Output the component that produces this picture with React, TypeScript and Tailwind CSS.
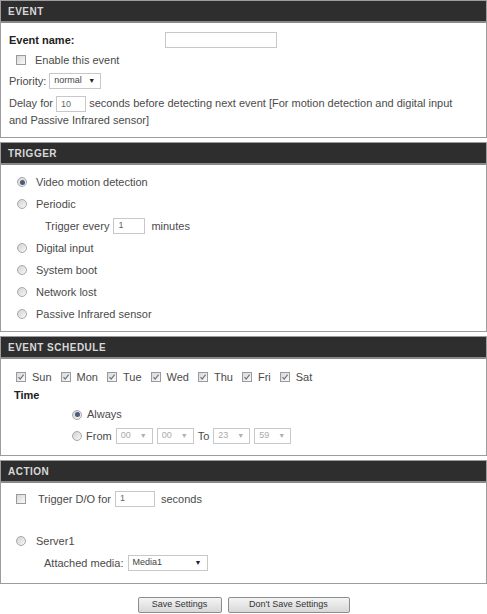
import type { ReactNode } from "react";

function Section({ title, children }: { title: string; children: ReactNode }) {
  return (
    <div className="border border-[#9c9c9c] mb-[4px] bg-white">
      <div className="h-[22px] bg-[#2e2e2e] border-b-2 border-[#8a8a8a] flex items-center pl-[7px] text-[10px] font-bold tracking-[0.5px] text-[#d8d8d8]">
        {title}
      </div>
      {children}
    </div>
  );
}

function Check({ checked = false }: { checked?: boolean }) {
  return (
    <span className="inline-flex w-[10px] h-[10px] border border-[#9a9a9a] bg-gradient-to-br from-[#d8d8d8] to-[#fafafa] items-center justify-center shrink-0">
      {checked && (
        <svg width="8" height="8" viewBox="0 0 8 8">
          <path d="M1.5 4.2 L3.2 6 L6.6 1.6" stroke="#6a7488" strokeWidth="1.2" fill="none" />
        </svg>
      )}
    </span>
  );
}

function Radio({ checked = false }: { checked?: boolean }) {
  return (
    <span className="inline-flex w-[10px] h-[10px] rounded-full border border-[#a8a8a8] bg-gradient-to-br from-[#d2d2d2] to-[#f8f8f8] items-center justify-center shrink-0">
      {checked && <span className="w-[5px] h-[5px] rounded-full bg-[#4b5a78]" />}
    </span>
  );
}

function TextBox({ value = "", className = "" }: { value?: string; className?: string }) {
  return (
    <span className={`inline-flex items-center h-[16px] border border-[#c8c8c8] bg-white pl-[4px] text-[9px] text-[#666] ${className}`}>
      {value}
    </span>
  );
}

function Select({ value, className = "", dark = true }: { value: string; className?: string; dark?: boolean }) {
  return (
    <span className={`inline-flex items-center justify-between h-[16px] border border-[#c8c8c8] bg-white pl-[4px] pr-[5px] text-[9px] ${dark ? "text-[#444]" : "text-[#aaa]"} ${className}`}>
      <span>{value}</span>
      <span className={`text-[7px] ${dark ? "text-[#222]" : "text-[#b0b0b0]"}`}>▼</span>
    </span>
  );
}

function Row({ children, className = "" }: { children: ReactNode; className?: string }) {
  return <div className={`flex items-center ${className}`}>{children}</div>;
}

const days = ["Sun", "Mon", "Tue", "Wed", "Thu", "Fri", "Sat"];

export default function App() {
  return (
    <div className="w-[487px] bg-white font-['Liberation_Sans',sans-serif] text-[11px] text-[#4a4a4a]">
      {/* Event */}
      <Section title="EVENT">
        <div className="px-[8px] pt-[7px] pb-[8px]">
          <Row className="h-[20px]">
            <span className="font-bold text-[#222] w-[156px]">Event name:</span>
            <TextBox className="w-[112px]" />
          </Row>
          <Row className="h-[20px] pl-[7px] gap-[9px]">
            <Check />
            <span>Enable this event</span>
          </Row>
          <Row className="h-[20px] gap-[3px] mt-[1px]">
            <span>Priority:</span>
            <Select value="normal" className="w-[52px]" />
          </Row>
          <div className="pt-[4px] leading-[17px]">
            Delay for <TextBox value="10" className="w-[30px] align-middle" /> seconds before detecting next event [For motion detection and digital input
            <br />
            and Passive Infrared sensor]
          </div>
        </div>
      </Section>

      {/* Trigger */}
      <Section title="TRIGGER">
        <div className="px-[16px] pt-[6px] pb-[6px]">
          <Row className="h-[22px] gap-[9px]">
            <Radio checked />
            <span>Video motion detection</span>
          </Row>
          <Row className="h-[22px] gap-[9px]">
            <Radio />
            <span>Periodic</span>
          </Row>
          <Row className="h-[22px] pl-[28px] gap-[4px]">
            <span>Trigger every</span>
            <TextBox value="1" className="w-[32px]" />
            <span className="ml-[2px]">minutes</span>
          </Row>
          <Row className="h-[22px] gap-[9px]">
            <Radio />
            <span>Digital input</span>
          </Row>
          <Row className="h-[22px] gap-[9px]">
            <Radio />
            <span>System boot</span>
          </Row>
          <Row className="h-[22px] gap-[9px]">
            <Radio />
            <span>Network lost</span>
          </Row>
          <Row className="h-[22px] gap-[9px]">
            <Radio />
            <span>Passive Infrared sensor</span>
          </Row>
        </div>
      </Section>

      {/* Event schedule */}
      <Section title="EVENT SCHEDULE">
        <div className="px-[15px] pt-[9px] pb-[8px]">
          <Row className="h-[18px] gap-[9px]">
            {days.map((d) => (
              <span key={d} className="inline-flex items-center gap-[6px]">
                <Check checked />
                <span>{d}</span>
              </span>
            ))}
          </Row>
          <Row className="h-[18px] -ml-[2px]">
            <span className="font-bold text-[#222]">Time</span>
          </Row>
          <Row className="h-[21px] pl-[56px] gap-[5px]">
            <Radio checked />
            <span>Always</span>
          </Row>
          <Row className="h-[22px] pl-[56px] gap-[4px]">
            <Radio />
            <span>From</span>
            <Select value="00" dark={false} className="w-[37px]" />
            <Select value="00" dark={false} className="w-[37px]" />
            <span>To</span>
            <Select value="23" dark={false} className="w-[37px]" />
            <Select value="59" dark={false} className="w-[37px]" />
          </Row>
        </div>
      </Section>

      {/* Action */}
      <Section title="ACTION">
        <div className="px-[15px] pt-[5px] pb-[9px]">
          <Row className="h-[22px] gap-[12px]">
            <Check />
            <span className="inline-flex items-center gap-[4px]">
              Trigger D/O for
              <TextBox value="1" className="w-[40px]" />
              <span className="ml-[2px]">seconds</span>
            </span>
          </Row>
          <div className="h-[20px]" />
          <Row className="h-[22px] gap-[10px]">
            <Radio />
            <span>Server1</span>
          </Row>
          <Row className="h-[22px] pl-[28px] gap-[4px]">
            <span>Attached media:</span>
            <Select value="Media1" className="w-[80px]" />
          </Row>
        </div>
      </Section>

      {/* Buttons */}
      <div className="flex justify-center gap-[6px] pt-[9px] pb-[4px]">
        <button className="h-[16px] w-[84px] border border-[#8c8c8c] rounded-[2px] bg-gradient-to-b from-[#f4f4f4] to-[#d8d8d8] text-[9px] text-[#333]">
          Save Settings
        </button>
        <button className="h-[16px] w-[122px] border border-[#8c8c8c] rounded-[2px] bg-gradient-to-b from-[#f4f4f4] to-[#d8d8d8] text-[9px] text-[#333]">
          Don't Save Settings
        </button>
      </div>
    </div>
  );
}
